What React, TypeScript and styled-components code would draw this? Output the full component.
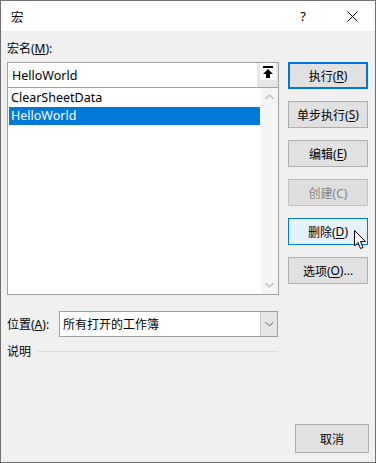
import React from 'react';
import styled, { createGlobalStyle } from 'styled-components';

const GlobalStyle = createGlobalStyle`
  html, body {
    margin: 0;
    padding: 0;
    background: #ffffff;
  }
  body {
    font-family: "Noto Sans", "Noto Sans CJK SC", sans-serif;
    font-size: 12px;
    color: #000;
  }
`;

const Dialog = styled.div`
  position: relative;
  width: 376px;
  height: 463px;
  box-sizing: border-box;
  border: 1px solid #6f6f6f;
  background: #f0f0f0;
  display: flex;
  flex-direction: column;
`;

const TitleBar = styled.div`
  height: 30px;
  background: #ffffff;
  display: flex;
  align-items: center;
  padding-left: 10px;
  font-size: 12.5px;
`;

const Title = styled.div`
  flex: 1;
`;

const TitleButton = styled.div<{ $w: number }>`
  width: ${(p) => p.$w}px;
  height: 30px;
  display: flex;
  align-items: center;
  justify-content: center;
  font-size: 13px;
`;

const Body = styled.div`
  flex: 1;
  display: grid;
  grid-template-columns: 272px 80px;
  column-gap: 9px;
  padding: 0 6px 0 6px;
`;

const LeftCol = styled.div`
  display: flex;
  flex-direction: column;
`;

const RightCol = styled.div`
  display: flex;
  flex-direction: column;
  padding-top: 31px;
  gap: 12px;
`;

const Label = styled.div`
  height: 16px;
  line-height: 16px;
  margin-top: 10px;
  margin-bottom: 5px;
  white-space: nowrap;
`;

const NameInput = styled.div`
  height: 25px;
  box-sizing: border-box;
  border: 1px solid #a0a0a0;
  border-bottom: none;
  background: #fff;
  display: flex;
  align-items: stretch;
`;

const InputText = styled.div`
  flex: 1;
  padding-left: 4px;
  display: flex;
  align-items: center;
  font-size: 12.5px;
`;

const UploadStrip = styled.div`
  width: 21px;
  background: #e6e6e6;
  display: flex;
  justify-content: center;
`;

const UploadBtn = styled.div`
  width: 16px;
  height: 17px;
  background: #fff;
  display: flex;
  align-items: center;
  justify-content: center;
`;

const ListBox = styled.div`
  height: 208px;
  box-sizing: border-box;
  border: 1px solid #a0a0a0;
  background: #fff;
  display: flex;
`;

const Items = styled.div`
  flex: 1;
  padding: 1px 1px 0 1px;
`;

const Item = styled.div<{ $selected?: boolean }>`
  height: 18px;
  line-height: 18px;
  padding-left: 2px;
  font-size: 12.5px;
  background: ${(p) => (p.$selected ? '#0078d7' : 'transparent')};
  color: ${(p) => (p.$selected ? '#fff' : '#000')};
`;

const ScrollBar = styled.div`
  width: 17px;
  background: #f4f4f4;
  display: flex;
  flex-direction: column;
  justify-content: space-between;
  align-items: center;
  padding: 6px 0;
`;

const PosRow = styled.div`
  display: flex;
  align-items: center;
  margin-top: 16px;
  height: 26px;
`;

const PosLabel = styled.div`
  width: 52px;
  white-space: nowrap;
`;

const Combo = styled.div`
  width: 219px;
  height: 26px;
  box-sizing: border-box;
  border: 1px solid #a0a0a0;
  background: #fff;
  display: flex;
`;

const ComboText = styled.div`
  flex: 1;
  padding-left: 3px;
  display: flex;
  align-items: center;
`;

const ComboArrow = styled.div`
  width: 16px;
  background: #e5e5e5;
  border-left: 1px solid #c4c4c4;
  display: flex;
  align-items: center;
  justify-content: center;
`;

const DescRow = styled.div`
  display: flex;
  align-items: center;
  gap: 6px;
  margin-top: 4px;
  height: 20px;
  padding-right: 1px;
`;

const DescLine = styled.div`
  flex: 1;
  height: 1px;
  background: #dcdcdc;
`;

type Kind = 'normal' | 'default' | 'hover' | 'disabled';

const Button = styled.div<{ $kind?: Kind }>`
  width: 80px;
  height: 27px;
  box-sizing: border-box;
  display: flex;
  align-items: center;
  justify-content: center;
  font-size: 12px;
  white-space: nowrap;
  border: ${(p) =>
    p.$kind === 'default'
      ? '2px solid #0078d7'
      : p.$kind === 'hover'
      ? '1px solid #0078d7'
      : p.$kind === 'disabled'
      ? '1px solid #bfbfbf'
      : '1px solid #adadad'};
  background: ${(p) =>
    p.$kind === 'hover' ? '#e5f1fb' : p.$kind === 'disabled' ? '#dedede' : '#e1e1e1'};
  color: ${(p) => (p.$kind === 'disabled' ? '#838383' : '#000')};

  u {
    text-decoration: underline;
    text-underline-offset: 2px;
  }
`;

const Footer = styled.div`
  display: flex;
  justify-content: flex-end;
  padding: 0 6px 9px 0;
`;

const CancelButton = styled(Button)`
  width: 74px;
  height: 29px;
`;

const Cursor = styled.svg`
  position: absolute;
  left: 353px;
  top: 229px;
`;

const macros = ['ClearSheetData', 'HelloWorld'];

export default function App() {
  return (
    <>
      <GlobalStyle />
      <Dialog>
        <TitleBar>
          <Title>宏</Title>
          <TitleButton $w={52}>?</TitleButton>
          <TitleButton $w={46}>
            <svg width="11" height="11" viewBox="0 0 11 11">
              <path d="M0.5 0.5 L10.5 10.5 M10.5 0.5 L0.5 10.5" stroke="#000" strokeWidth="1" />
            </svg>
          </TitleButton>
        </TitleBar>
        <Body>
          <LeftCol>
            <Label>
              宏名(<u>M</u>):
            </Label>
            <NameInput>
              <InputText>HelloWorld</InputText>
              <UploadStrip>
                <UploadBtn>
                  <svg width="12" height="12" viewBox="0 0 12 12">
                    <rect x="1" y="0" width="10" height="2" fill="#000" />
                    <path d="M6 3 L11 8 L8 8 L8 12 L4 12 L4 8 L1 8 Z" fill="#000" />
                  </svg>
                </UploadBtn>
              </UploadStrip>
            </NameInput>
            <ListBox>
              <Items>
                {macros.map((m) => (
                  <Item key={m} $selected={m === 'HelloWorld'}>
                    {m}
                  </Item>
                ))}
              </Items>
              <ScrollBar>
                <svg width="9" height="6" viewBox="0 0 9 6">
                  <path d="M0.5 5 L4.5 1 L8.5 5" stroke="#c2c2c2" strokeWidth="1.5" fill="none" />
                </svg>
                <svg width="9" height="6" viewBox="0 0 9 6">
                  <path d="M0.5 1 L4.5 5 L8.5 1" stroke="#c2c2c2" strokeWidth="1.5" fill="none" />
                </svg>
              </ScrollBar>
            </ListBox>
            <PosRow>
              <PosLabel>
                位置(<u>A</u>):
              </PosLabel>
              <Combo>
                <ComboText>所有打开的工作簿</ComboText>
                <ComboArrow>
                  <svg width="9" height="6" viewBox="0 0 9 6">
                    <path d="M0.5 1 L4.5 5 L8.5 1" stroke="#606060" strokeWidth="1" fill="none" />
                  </svg>
                </ComboArrow>
              </Combo>
            </PosRow>
            <DescRow>
              <span>说明</span>
              <DescLine />
            </DescRow>
          </LeftCol>
          <RightCol>
            <Button $kind="default">
              执行(<u>R</u>)
            </Button>
            <Button>
              单步执行(<u>S</u>)
            </Button>
            <Button>
              编辑(<u>E</u>)
            </Button>
            <Button $kind="disabled">创建(C)</Button>
            <Button $kind="hover">
              删除(<u>D</u>)
            </Button>
            <Button>
              选项(<u>O</u>)...
            </Button>
          </RightCol>
        </Body>
        <Footer>
          <CancelButton>取消</CancelButton>
        </Footer>
        <Cursor width="13" height="20" viewBox="0 0 13 20">
          <path
            d="M0.5 0.5 L0.5 16 L4 12.5 L6.5 18.5 L9 17.5 L6.5 11.5 L11.5 11.5 Z"
            fill="#fff"
            stroke="#000"
            strokeWidth="1"
          />
        </Cursor>
      </Dialog>
    </>
  );
}
